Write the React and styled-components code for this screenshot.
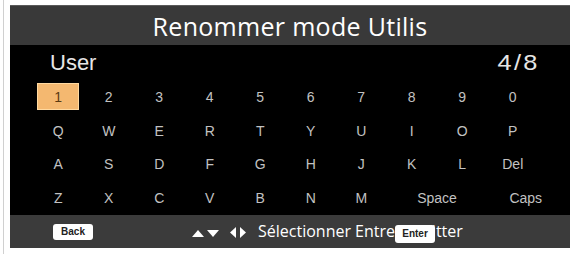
import React from "react";
import styled, { createGlobalStyle } from "styled-components";

const Global = createGlobalStyle`
  html, body { margin: 0; padding: 0; background: #ffffff; }
  body { width: 575px; height: 254px; overflow: hidden; }
`;

const Frame = styled.div`
  width: 575px;
  height: 254px;
  box-sizing: border-box;
  padding: 5px 5px 6px 10px;
  position: relative;
  &::before {
    content: "";
    position: absolute;
    left: 3px;
    top: 0;
    bottom: 0;
    width: 1px;
    background: #d0d0d0;
  }
`;

const Panel = styled.div`
  width: 560px;
  height: 243px;
  display: flex;
  flex-direction: column;
  background: #000;
  font-family: "Open Sans", "Liberation Sans", sans-serif;
`;

const TitleBar = styled.div`
  height: 40px;
  background: #393939;
  border-top: 1px solid #5a5a5a;
  box-sizing: border-box;
  display: flex;
  align-items: center;
  justify-content: center;
  color: #ffffff;
  font-size: 25px;
  letter-spacing: 0.3px;
`;

const InfoRow = styled.div`
  height: 35px;
  display: flex;
  align-items: center;
  justify-content: space-between;
  padding: 0 30px 0 40px;
  color: #e6e6e6;
  font-size: 22px;
  font-family: "Liberation Sans", Arial, sans-serif;
`;

const Fraction = styled.span`
  letter-spacing: 2px;
  transform: scaleX(1.15);
  transform-origin: right center;
`;

const Grid = styled.div`
  display: grid;
  grid-template-columns: repeat(10, 50.5px);
  grid-auto-rows: 33.75px;
  padding-left: 23px;
  height: 135px;
`;

const Key = styled.div`
  grid-column: ${(p) => (p.$span ? `span ${p.$span}` : "auto")};
  display: flex;
  align-items: center;
  justify-content: center;
  margin-left: ${(p) => p.$shift || 0}px;
  color: ${(p) => (p.$selected ? "#5a3a12" : "#c2c2c2")};
  font-family: "Liberation Sans", Arial, sans-serif;
  font-size: 14px;
  & > span {
    display: flex;
    align-items: center;
    justify-content: center;
    min-width: 42px;
    height: 27px;
    background: ${(p) => (p.$selected ? "#f4b870" : "transparent")};
    border: ${(p) => (p.$selected ? "1px solid #ffd9a0" : "none")};
    box-sizing: border-box;
  }
`;

const Footer = styled.div`
  height: 33px;
  margin-top: auto;
  background: #3b3b3b;
  display: flex;
  align-items: center;
  color: #ffffff;
  font-size: 16px;
`;

const Badge = styled.span`
  display: inline-flex;
  align-items: center;
  justify-content: center;
  width: ${(p) => p.$w}px;
  height: 16px;
  background: #ffffff;
  border-radius: 3px;
  color: #222;
  font-family: "Liberation Sans", Arial, sans-serif;
  font-weight: bold;
  font-size: 10px;
`;

const BackSlot = styled.div`
  padding-left: 43px;
  width: 139px;
  display: flex;
  align-items: center;
`;

const Arrows = styled.svg`
  width: 56px;
  height: 12px;
  margin-right: 10px;
  flex-shrink: 0;
`;

const Help = styled.div`
  position: relative;
  white-space: nowrap;
  display: flex;
  align-items: center;
  padding-bottom: 2px;
`;

const Quit = styled.span`
  margin-left: 8px;
`;

const EnterOverlay = styled(Badge)`
  position: absolute;
  left: 137px;
  top: 5px;
  height: 18px;
`;

const rows = [
  ["1", "2", "3", "4", "5", "6", "7", "8", "9", "0"],
  ["Q", "W", "E", "R", "T", "Y", "U", "I", "O", "P"],
  ["A", "S", "D", "F", "G", "H", "J", "K", "L", "Del"],
];
const last = ["Z", "X", "C", "V", "B", "N", "M"];

export default function App() {
  return (
    <>
      <Global />
      <Frame>
        <Panel>
          <TitleBar>Renommer mode Utilis</TitleBar>
          <InfoRow>
            <span>User</span>
            <Fraction>4/8</Fraction>
          </InfoRow>
          <Grid>
            {rows.flat().map((k, i) => (
              <Key key={i} $selected={i === 0}>
                <span>{k}</span>
              </Key>
            ))}
            {last.map((k) => (
              <Key key={k}>
                <span>{k}</span>
              </Key>
            ))}
            <Key $span={2}>
              <span>Space</span>
            </Key>
            <Key $shift={26}>
              <span>Caps</span>
            </Key>
          </Grid>
          <Footer>
            <BackSlot>
              <Badge $w={40}>Back</Badge>
            </BackSlot>
            <Arrows viewBox="0 0 56 12">
              <polygon points="0,11 6,4 12,11" fill="#ffffff" />
              <polygon points="15,4 27,4 21,11" fill="#ffffff" />
              <polygon points="44,1 44,12 38,6.5" fill="#ffffff" />
              <polygon points="48,1 48,12 54,6.5" fill="#ffffff" />
            </Arrows>
            <Help>
              <span>Sélectionner Entrer</span>
              <Quit>Quitter</Quit>
              <EnterOverlay $w={40}>Enter</EnterOverlay>
            </Help>
          </Footer>
        </Panel>
      </Frame>
    </>
  );
}
